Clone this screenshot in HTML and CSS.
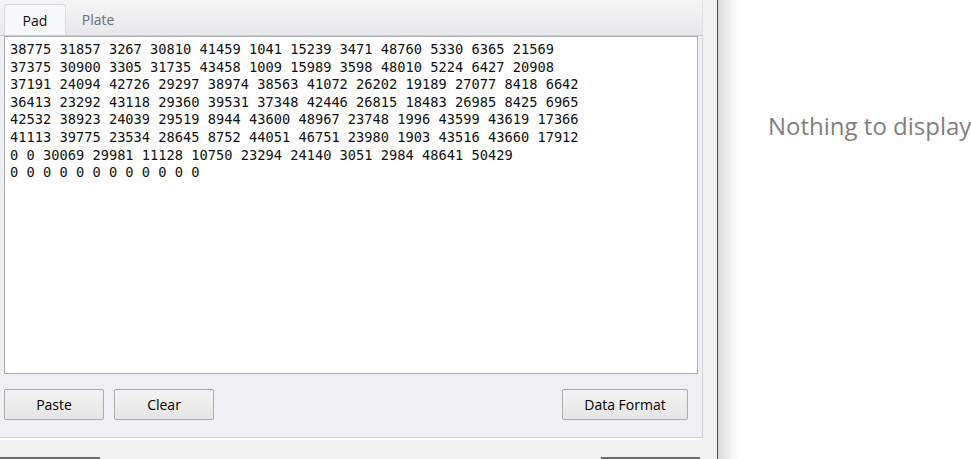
FILE: index.html
```html
<!DOCTYPE html>
<html>
<head>
<meta charset="utf-8">
<link rel="stylesheet" href="styles.css">
</head>
<body>
<div class="app">
  <div class="left">
    <div class="tabs">
      <div class="tab active">Pad</div>
      <div class="tab">Plate</div>
    </div>
    <div class="panel">
      <div class="pad">38775 31857 3267 30810 41459 1041 15239 3471 48760 5330 6365 21569
37375 30900 3305 31735 43458 1009 15989 3598 48010 5224 6427 20908
37191 24094 42726 29297 38974 38563 41072 26202 19189 27077 8418 6642
36413 23292 43118 29360 39531 37348 42446 26815 18483 26985 8425 6965
42532 38923 24039 29519 8944 43600 48967 23748 1996 43599 43619 17366
41113 39775 23534 28645 8752 44051 46751 23980 1903 43516 43660 17912
0 0 30069 29981 11128 10750 23294 24140 3051 2984 48641 50429
0 0 0 0 0 0 0 0 0 0 0 0</div>
      <div class="actions">
        <button class="btn">Paste</button>
        <button class="btn">Clear</button>
        <span class="spacer"></span>
        <button class="btn wide">Data Format</button>
      </div>
    </div>
    <div class="footer">
      <span class="stub"></span>
      <span class="stub right"></span>
    </div>
  </div>
  <div class="gap"></div>
  <div class="viewer">
    <div class="empty">Nothing to display</div>
  </div>
</div>
</body>
</html>
```
FILE: styles.css
```css
html, body {
  margin: 0;
  padding: 0;
  height: 100%;
  overflow: hidden;
}
body {
  background: #f0f0f0;
  font-family: "Open Sans", "Noto Sans", sans-serif;
}
.app {
  display: flex;
  height: 459px;
}
.left {
  width: 703px;
  display: flex;
  flex-direction: column;
}
.tabs {
  height: 35px;
  display: flex;
  align-items: flex-end;
  padding-left: 4px;
  background: linear-gradient(#f5f5f5, #e6e8ea);
  border-right: 1px solid #dfe2e6;
  box-sizing: border-box;
}
.tab {
  height: 31px;
  box-sizing: border-box;
  padding: 6px 0 0;
  width: 62px;
  text-align: center;
  font-size: 14px;
  color: #6d6d6d;
}
.tab.active {
  background: #f7f8f9;
  border: 1px solid #d6d9dd;
  border-bottom: none;
  border-radius: 3px 3px 0 0;
  color: #111;
}
.tab:not(.active) {
  padding-left: 2px;
}
.panel {
  height: 403px;
  box-sizing: border-box;
  background: #eef0f3;
  border-top: 1px solid #c9cdd2;
  border-right: 1px solid #cfd3d8;
  border-bottom: 1px solid #cfd3d8;
  padding: 0 4px 0 4px;
  display: flex;
  flex-direction: column;
}
.pad {
  height: 338px;
  box-sizing: border-box;
  background: #fff;
  border: 1px solid #abadb3;
  width: 694px;
  padding: 4px 0 0 5px;
  font-family: "DejaVu Sans Mono", "Liberation Mono", monospace;
  font-size: 13.7px;
  line-height: 17.6px;
  white-space: pre;
  color: #111;
}
.actions {
  display: flex;
  align-items: center;
  margin-top: 15px;
  gap: 10px;
  padding-right: 10px;
}
.spacer {
  flex: 1;
}
.btn {
  width: 100px;
  height: 31px;
  box-sizing: border-box;
  border: 1px solid #acacac;
  border-radius: 2px;
  background: linear-gradient(#f3f3f3, #e5e5e5);
  font-family: "Open Sans", "Noto Sans", sans-serif;
  font-size: 14px;
  color: #000;
  padding: 0;
}
.btn.wide {
  width: 126px;
}
.footer {
  flex: 1;
  border-top: 2px solid #fcfcfc;
  display: flex;
  align-items: flex-end;
  justify-content: space-between;
  padding-right: 3px;
}
.stub {
  width: 100px;
  height: 2px;
  background: #6a6a6a;
}
.stub.right {
  width: 99px;
}
.gap {
  width: 14px;
  background: #f0f0f0;
}
.viewer {
  flex: 1;
  border-left: 1px solid #3b4a80;
  background: linear-gradient(to right, #d9d9d9 0, #f4f4f4 14px, #ffffff 24px);
  overflow: hidden;
}
.empty {
  margin: 109px 0 0 50px;
  font-size: 24px;
  color: #7f7f7f;
  white-space: nowrap;
  font-family: "Open Sans", "Noto Sans", sans-serif;
  font-weight: 400;
}
```
